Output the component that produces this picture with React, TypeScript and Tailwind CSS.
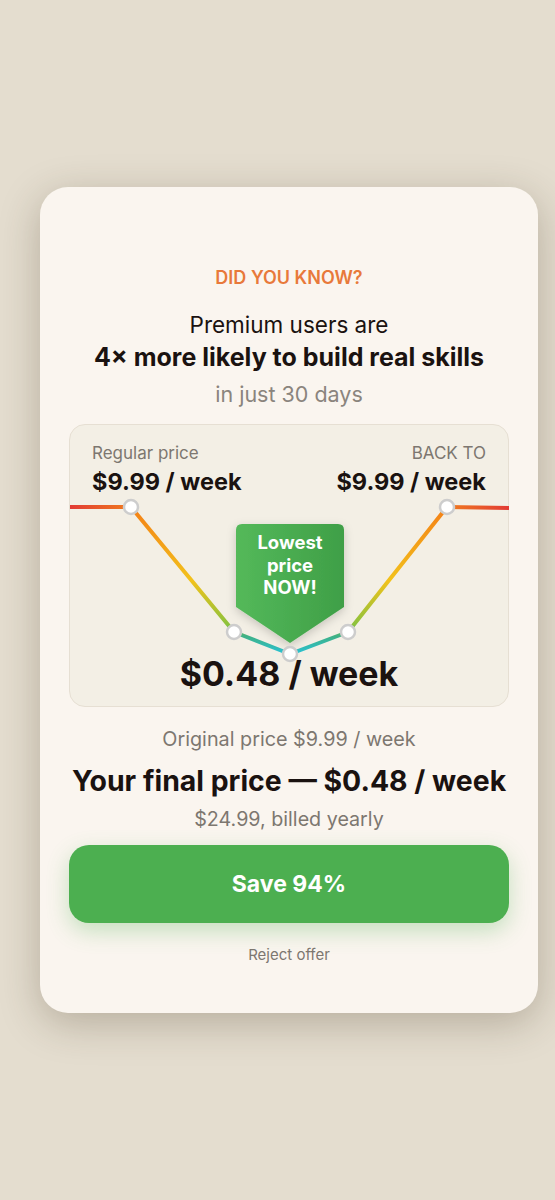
const font = { fontFamily: "Inter, 'Noto Sans', sans-serif" };

function PriceChart() {
  return (
    <div className="relative mt-[14px] h-[283px] rounded-[16px] border border-[#e6dfd3] bg-[#f3efe5] flex flex-col">
      <svg
        className="absolute left-0 top-0"
        width="439"
        height="283"
        viewBox="0 0 439 283"
        fill="none"
      >
        <defs>
          <linearGradient id="hl" x1="0" y1="0" x2="61" y2="0" gradientUnits="userSpaceOnUse">
            <stop offset="0" stopColor="#e23b35" />
            <stop offset="1" stopColor="#f07c1e" />
          </linearGradient>
          <linearGradient id="hr" x1="377" y1="0" x2="439" y2="0" gradientUnits="userSpaceOnUse">
            <stop offset="0" stopColor="#f07c1e" />
            <stop offset="1" stopColor="#e23b35" />
          </linearGradient>
          <linearGradient id="vv" x1="0" y1="82" x2="0" y2="229" gradientUnits="userSpaceOnUse">
            <stop offset="0" stopColor="#f47f16" />
            <stop offset="0.5" stopColor="#f2c21c" />
            <stop offset="0.8" stopColor="#8cc23c" />
            <stop offset="0.88" stopColor="#3eb187" />
            <stop offset="1" stopColor="#29c3d6" />
          </linearGradient>
          <linearGradient id="tag" x1="166" y1="0" x2="274" y2="0" gradientUnits="userSpaceOnUse">
            <stop offset="0" stopColor="#54b95a" />
            <stop offset="1" stopColor="#3f9f47" />
          </linearGradient>
          <filter id="sh" x="-30%" y="-30%" width="160%" height="160%">
            <feDropShadow dx="0" dy="3" stdDeviation="5" floodColor="#000" floodOpacity="0.18" />
          </filter>
        </defs>
        <path d="M0 82 H61" stroke="url(#hl)" strokeWidth="4" />
        <path d="M377 82 L439 83" stroke="url(#hr)" strokeWidth="4" />
        <path
          d="M61 82 L164 207 L220 229 L278 207 L377 82"
          stroke="url(#vv)"
          strokeWidth="4"
          strokeLinejoin="round"
        />
        <path
          d="M172 99 H268 Q274 99 274 105 V182 L220 218 L166 182 V105 Q166 99 172 99 Z"
          fill="url(#tag)"
          filter="url(#sh)"
        />
        {[
          [61, 82],
          [164, 207],
          [220, 229],
          [278, 207],
          [377, 82],
        ].map(([x, y]) => (
          <circle key={x} cx={x} cy={y} r="7" fill="#ffffff" stroke="#cdcdcd" strokeWidth="2.5" />
        ))}
      </svg>

      <div className="relative flex justify-between px-[22px] pt-[16px]">
        <div>
          <div className="text-[17px] leading-[24px] text-[#7d7770]">Regular price</div>
          <div className="mt-[2px] text-[23.5px] leading-[30px] font-bold text-[#1a1210]">$9.99 / week</div>
        </div>
        <div className="text-right">
          <div className="text-[17px] leading-[24px] text-[#7d7770]">BACK TO</div>
          <div className="mt-[2px] text-[23.5px] leading-[30px] font-bold text-[#1a1210]">$9.99 / week</div>
        </div>
      </div>

      <div className="absolute left-[166px] top-[106px] w-[108px] text-center text-[18.5px] leading-[22.5px] font-bold text-white">
        Lowest
        <br />
        price
        <br />
        NOW!
      </div>

      <div className="relative mt-auto pb-[10px] text-center text-[34px] leading-[44px] font-bold text-[#1a1210]">
        $0.48 / week
      </div>
    </div>
  );
}

export default function App() {
  return (
    <main className="min-h-[1200px] bg-[#e4ddcf] pt-[187px]" style={font}>
      <div className="ml-[40px] w-[498px] rounded-[28px] bg-[#faf5ef] px-[29px] pt-[79px] pb-[47px] shadow-[0_10px_40px_rgba(60,45,25,0.28)]">
        <div className="text-center text-[18px] leading-[24px] font-semibold text-[#e8793a]">DID YOU KNOW?</div>
        <div className="mt-[19px] text-center text-[22.5px] leading-[32px] text-[#1a1210]">Premium users are</div>
        <div className="text-center text-[25px] leading-[32px] font-bold text-[#1a1210]">
          4× more likely to build real skills
        </div>
        <div className="mt-[5px] text-center text-[21.5px] leading-[32px] text-[#8a847d]">in just 30 days</div>

        <PriceChart />

        <div className="mt-[19px] text-center text-[19.8px] leading-[26px] text-[#7d7770]">
          Original price $9.99 / week
        </div>
        <div className="mt-[11px] text-center text-[28.4px] leading-[36px] font-bold text-[#1a1210]">
          Your final price — $0.48 / week
        </div>
        <div className="mt-[7px] text-center text-[19.7px] leading-[26px] text-[#7d7770]">
          $24.99, billed yearly
        </div>
        <button className="mt-[13px] h-[78px] w-full rounded-[20px] bg-[#4caf50] text-[23px] font-bold text-white shadow-[0_8px_22px_rgba(76,175,80,0.3)]">
          Save 94%
        </button>
        <div className="mt-[21px] text-center text-[15px] leading-[22px] text-[#7d7770]">Reject offer</div>
      </div>
    </main>
  );
}
